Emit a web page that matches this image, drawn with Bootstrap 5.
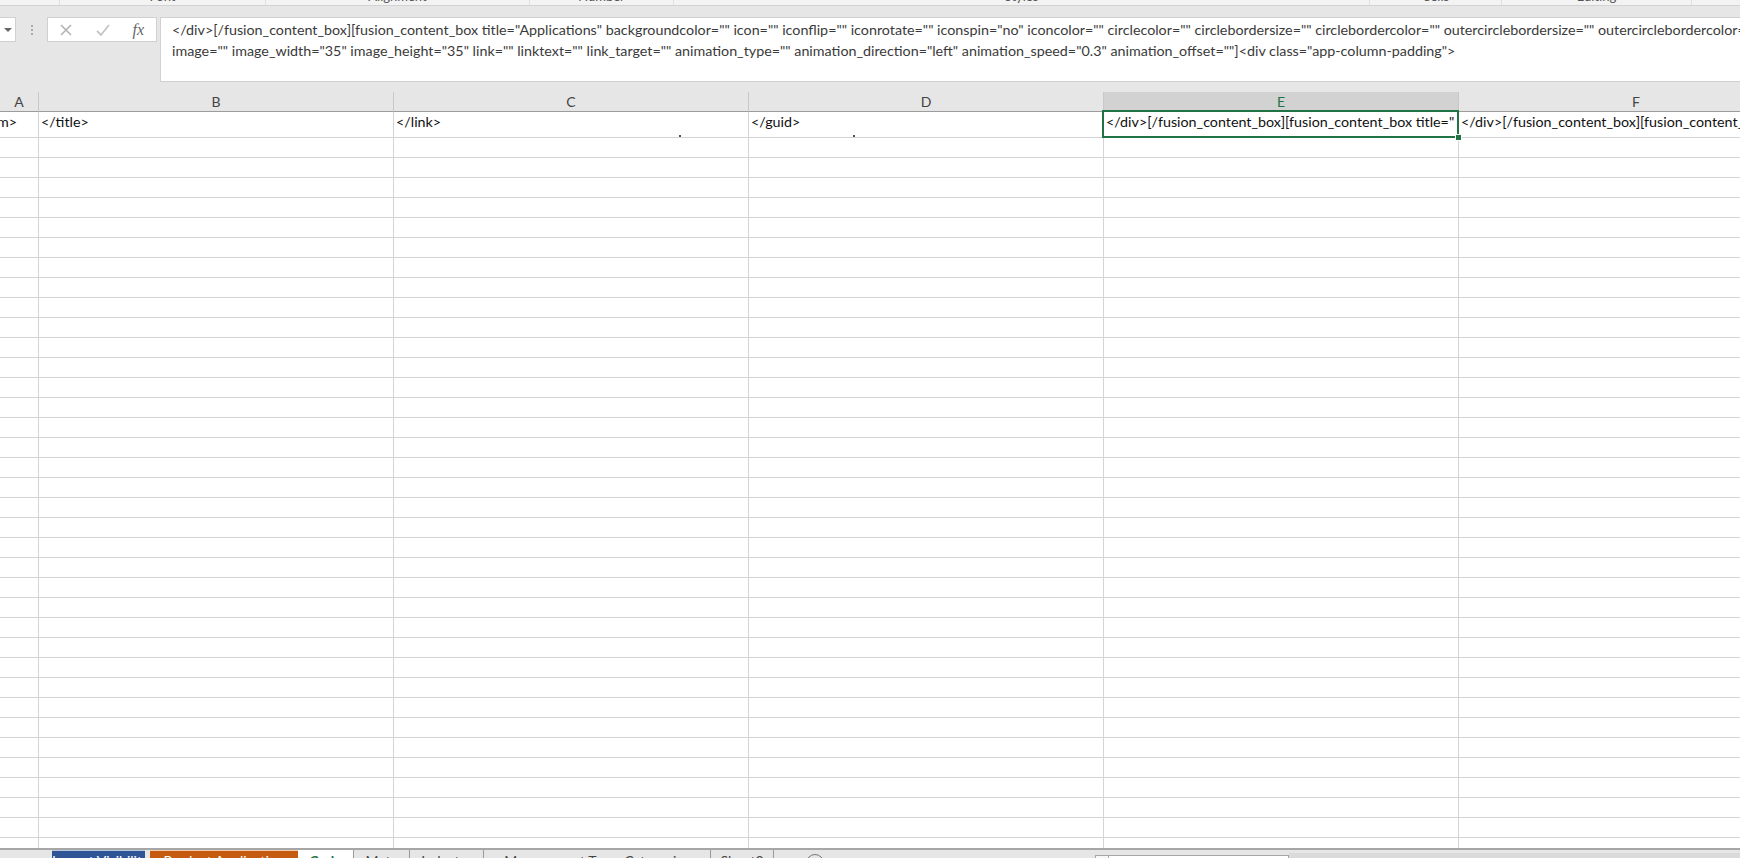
<!DOCTYPE html>
<html lang="en">
<head>
    <meta charset="UTF-8">
    <title>Excel sheet</title>
    <link href="https://cdn.jsdelivr.net/npm/bootstrap@5.3.0/dist/css/bootstrap.min.css" rel="stylesheet">
    <style>
        body {
            width: 1740px;
            height: 858px;
            overflow: hidden;
            background: #e6e6e6;
            font-family: Lato, "Liberation Sans", sans-serif;
            color: #222;
        }
        .xl-app { height: 858px; }

        /* ribbon, only the bottom edge is left */
        .xl-ribbon { height: 6px; flex: none; background: #f3f3f3; border-bottom: 1px solid #d2d2d2; overflow: hidden; }
        .rb-cell { flex: none; height: 5px; text-align: center; font-size: 13px; line-height: 14px; color: #555; border-right: 1px solid #e0e0e0; }
        .rb-cell span { display: block; margin-top: -11px; }

        /* formula bar */
        .xl-formula { height: 86px; flex: none; padding-top: 11px; }
        .name-box { width: 16px; height: 25px; flex: none; background: #fff; border: 1px solid #d0d0d0; border-left: 0; }
        .name-arrow { width: 0; height: 0; border-left: 4px solid transparent; border-right: 4px solid transparent; border-top: 4px solid #666; }
        .fx-dots { width: 31px; flex: none; height: 25px; }
        .fx-dots i { display: block; width: 2px; height: 2px; margin: 1px 0; background: #aaa; }
        .fx-tools { width: 110px; height: 25px; flex: none; background: #fff; border: 1px solid #d0d0d0; padding: 0 12px 0 11px; }
        .fx-label { font-family: "Liberation Serif", serif; font-style: italic; font-size: 16px; color: #666; line-height: 1; }
        .fx-input { margin-left: 3px; flex: 1; min-width: 0; height: 65px; background: #fff; border: 1px solid #d0d0d0; border-right: 0; padding: 2px 0 0 11px; overflow: hidden; font-size: 14.3px; line-height: 20.5px; color: #3a3a3a; white-space: nowrap; }

        /* sheet */
        .sheet-wrap { flex: 1; min-height: 0; overflow: hidden; background: #fff; }
        .sheet { width: 1814px; table-layout: fixed; border-collapse: separate; border-spacing: 0; font-size: 14.3px; color: #111; }
        .sheet th { height: 20px; background: #e6e6e6; font-weight: 400; font-size: 14px; color: #444; text-align: center; border-right: 1px solid #c8c8c8; border-bottom: 1px solid #9c9c9c; padding: 0; line-height: 18px; }
        .sheet th.col-on { background: #d2d2d2; color: #217346; }
        .sheet td { height: 20px; padding: 0 2px; border-right: 1px solid #d4d4d4; border-bottom: 1px solid #d4d4d4; white-space: nowrap; overflow: hidden; line-height: 18px; }
        .sheet tr.row-first td { height: 26px; padding-bottom: 6px; }
        .sheet td.cell-a { padding-left: 0; }
        .sheet td.cell-a span { display: block; margin-left: -3px; }
        .sheet td.cell-on { position: relative; overflow: visible; }
        .cell-clip { display: block; overflow: hidden; }
        .sel-box { position: absolute; left: -2px; top: -2px; right: -1px; bottom: -1px; border: 2px solid #217346; pointer-events: none; }
        .sel-grip { position: absolute; right: -4px; bottom: -4px; width: 7px; height: 7px; background: #217346; border: 1px solid #fff; }
        .speck { position: absolute; bottom: -1px; width: 2px; height: 3px; background: #555; }
        .sheet td.has-speck { position: relative; }

        /* tabs */
        .xl-tabs { height: 10px; flex: none; overflow: hidden; background: #e6e6e6; border-top: 2px solid #a6a6a6; font-size: 14px; line-height: 16px; white-space: nowrap; }
        .tab-pad { width: 52px; flex: none; }
        .tab-item { flex: none; padding-top: 3px; text-align: center; color: #444; border-right: 1px solid #9a9a9a; }
        .tab-blue, .tab-orange { margin-top: 1px; color: #fff; padding-top: 2px; border-right: 0; }
        .tab-blue { width: 93px; background: #2f5597; box-shadow: 0 -1px 0 #b9c7de; margin-right: 5px; }
        .tab-orange { width: 148px; background: #c55a11; box-shadow: 0 -1px 0 #f2cfa9; }
        .tab-code { width: 56px; background: #fff; color: #217346; font-weight: 700; }
        .tab-meta { width: 56px; }
        .tab-ind { width: 74px; }
        .tab-mgmt { width: 227px; }
        .tab-sheet2 { width: 63px; }
        .tab-add { width: 18px; height: 18px; flex: none; margin: 4px 0 0 32px; border: 1.5px solid #777; border-radius: 50%; }
        .tab-spacer { width: 271px; flex: none; }
        .scroll-left { width: 14px; height: 8px; flex: none; margin-top: 5px; background: #f8f8f8; border: 1px solid #a6a6a6; border-bottom: 0; }
        .scroll-thumb { width: 180px; height: 8px; flex: none; margin-top: 5px; background: #fff; border: 1px solid #a6a6a6; border-left: 0; border-bottom: 0; }
        .scroll-rest { flex: 1; margin-top: 3px; background: #dadada; }
    </style>
</head>
<body>
<div class="xl-app d-flex flex-column">
    <div class="xl-ribbon d-flex">
        <div class="rb-cell" style="width:60px"></div>
        <div class="rb-cell" style="width:206px"><span>Font</span></div>
        <div class="rb-cell" style="width:264px"><span>Alignment</span></div>
        <div class="rb-cell" style="width:144px"><span>Number</span></div>
        <div class="rb-cell" style="width:696px"><span>Styles</span></div>
        <div class="rb-cell" style="width:132px"><span>Cells</span></div>
        <div class="rb-cell" style="width:190px"><span>Editing</span></div>
    </div>

    <div class="xl-formula d-flex align-items-start">
        <div class="name-box d-flex align-items-center justify-content-center"><div class="name-arrow"></div></div>
        <div class="fx-dots d-flex flex-column align-items-center justify-content-center"><i></i><i></i><i></i></div>
        <div class="fx-tools d-flex align-items-center justify-content-between">
            <svg width="14" height="14" viewBox="0 0 14 14"><path d="M2 2 12 12M12 2 2 12" stroke="#b4b4b4" stroke-width="1.6" fill="none"/></svg>
            <svg width="16" height="14" viewBox="0 0 16 14"><path d="M2 8 6 12 14 2" stroke="#c4c4c4" stroke-width="1.8" fill="none"/></svg>
            <span class="fx-label">fx</span>
        </div>
        <div class="fx-input">
            <div>&lt;/div&gt;[/fusion_content_box][fusion_content_box title="Applications" backgroundcolor="" icon="" iconflip="" iconrotate="" iconspin="no" iconcolor="" circlecolor="" circlebordersize="" circlebordercolor="" outercirclebordersize="" outercirclebordercolor=""</div>
            <div>image="" image_width="35" image_height="35" link="" linktext="" link_target="" animation_type="" animation_direction="left" animation_speed="0.3" animation_offset=""]&lt;div class="app-column-padding"&gt;</div>
        </div>
    </div>

    <div class="sheet-wrap">
        <table class="sheet">
            <colgroup>
                <col style="width:39px"><col style="width:355px"><col style="width:355px"><col style="width:355px"><col style="width:355px"><col style="width:355px">
            </colgroup>
            <thead>
                <tr><th>A</th><th>B</th><th>C</th><th>D</th><th class="col-on">E</th><th>F</th></tr>
            </thead>
            <tbody id="sheetBody">
                <tr class="row-first">
                    <td class="cell-a"><span>m&gt;</span></td>
                    <td>&lt;/title&gt;</td>
                    <td class="has-speck">&lt;/link&gt;<i class="speck" style="left:285px"></i></td>
                    <td class="has-speck">&lt;/guid&gt;<i class="speck" style="left:104px"></i></td>
                    <td class="cell-on"><span class="cell-clip">&lt;/div&gt;[/fusion_content_box][fusion_content_box title="</span><div class="sel-box"></div><div class="sel-grip"></div></td>
                    <td>&lt;/div&gt;[/fusion_content_box][fusion_content_box title="Applications"</td>
                </tr>
            </tbody>
        </table>
    </div>

    <div class="xl-tabs d-flex">
        <div class="tab-pad"></div>
        <div class="tab-item tab-blue">Layout Visibility</div>
        <div class="tab-item tab-orange">Product Application</div>
        <div class="tab-item tab-code">Code</div>
        <div class="tab-item tab-meta">Meta</div>
        <div class="tab-item tab-ind">Industry</div>
        <div class="tab-item tab-mgmt">Management Team Categories</div>
        <div class="tab-item tab-sheet2">Sheet2</div>
        <div class="tab-add"></div>
        <div class="tab-spacer"></div>
        <div class="scroll-left"></div>
        <div class="scroll-thumb"></div>
        <div class="scroll-rest"></div>
    </div>
</div>

<script src="https://cdn.jsdelivr.net/npm/bootstrap@5.3.0/dist/js/bootstrap.bundle.min.js"></script>
<script>
    // blank rows down to the tab strip
    const body = document.getElementById('sheetBody');
    for (let i = 0; i < 36; i++) {
        const tr = document.createElement('tr');
        for (let c = 0; c < 6; c++) tr.appendChild(document.createElement('td'));
        body.appendChild(tr);
    }
</script>
</body>
</html>
